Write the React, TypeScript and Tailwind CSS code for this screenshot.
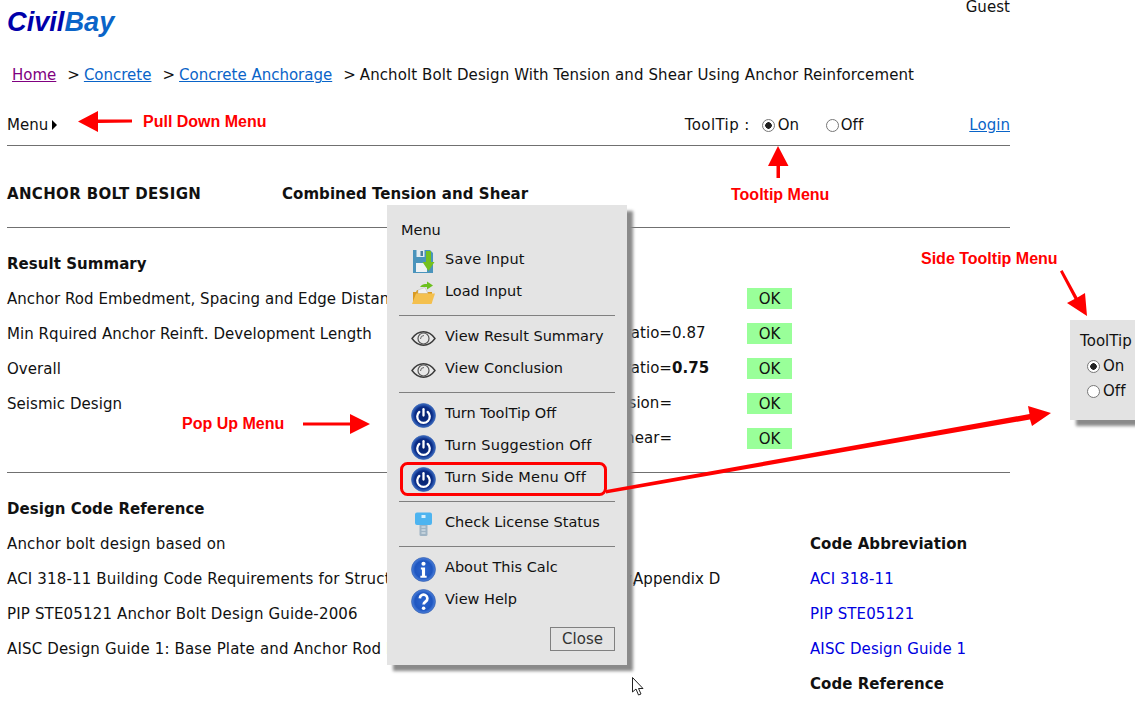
import React, { useId } from 'react';

// round blue glossy button used for power / info / help icons
function Orb({ dark, children }: { dark?: boolean; children: React.ReactNode }) {
  const id = useId();
  return (
    <svg width="25" height="25" viewBox="0 0 24 24">
      <defs>
        <radialGradient id={id} cx="50%" cy="50%" r="55%">
          <stop offset="0%" stopColor={dark ? '#08246e' : '#2d66d0'} />
          <stop offset="65%" stopColor={dark ? '#0a2c86' : '#1f56c0'} />
          <stop offset="100%" stopColor={dark ? '#4f86dc' : '#5f92e6'} />
        </radialGradient>
      </defs>
      <circle cx="12" cy="12" r="11.5" fill={`url(#${id})`} stroke="#2a55a8" strokeWidth="0.6" />
      {children}
    </svg>
  );
}

function PowerIcon() {
  return (
    <Orb dark>
      <path d="M8 8.6a6 6 0 1 0 8 0" fill="none" stroke="#fff" strokeWidth="2.2" strokeLinecap="round" />
      <path d="M12 6v6" stroke="#fff" strokeWidth="2.2" strokeLinecap="round" />
    </Orb>
  );
}

function InfoIcon() {
  return (
    <Orb>
      <circle cx="12" cy="6.5" r="2" fill="#fff" />
      <path d="M9.5 10h4v8h1.5v2H9v-2h1.5v-6h-1z" fill="#fff" />
    </Orb>
  );
}

function HelpIcon() {
  return (
    <Orb>
      <path d="M8.5 9a3.6 3.6 0 1 1 5.6 3c-1.3.9-2 1.4-2 2.8" fill="none" stroke="#fff" strokeWidth="2.6" />
      <circle cx="12.1" cy="18.5" r="1.7" fill="#fff" />
    </Orb>
  );
}

function EyeIcon() {
  return (
    <svg width="25" height="25" viewBox="0 0 25 25">
      <path d="M1 12.500C5 7 9 5.800 12.500 5.800S20 7 24 12.500C20 18 16 19.200 12.500 19.200S5 18 1 12.500z" fill="#e8e8e8" stroke="#3a3a3a" strokeWidth="1.4" />
      <circle cx="12.500" cy="12.500" r="5.500" fill="none" stroke="#555" strokeWidth="1.2" />
      <path d="M9.500 13a3.500 3.500 0 0 1 3.500-3.500" fill="none" stroke="#666" strokeWidth="1" />
    </svg>
  );
}

function SaveIcon() {
  return (
    <svg width="25" height="25" viewBox="0 0 25 25">
      <path d="M2 1h17l3 3v20H2z" fill="#4a94bc" />
      <rect x="5.500" y="1" width="8" height="7" fill="#e4ecf0" />
      <rect x="9.500" y="2" width="2.500" height="5" fill="#4a7fa0" />
      <rect x="5" y="14" width="11" height="9" fill="#eef2f4" />
      <path d="M15 2h5v11h3.500l-6 9-6-9H15z" fill="#74c020" />
    </svg>
  );
}

function FolderIcon() {
  return (
    <svg width="25" height="25" viewBox="0 0 25 25">
      <path d="M2 11h3l1-2h8l2 2h5v11H2z" fill="#d99a22" />
      <path d="M7 9l7-2.500 3 6H7z" fill="#f0f0f0" stroke="#bbb" strokeWidth="0.5" />
      <path d="M5 12.500h19l-3.500 10.500H1z" fill="#f4c04e" />
      <path d="M9 6c1.500-2.500 4-3 7-3V.5L22 4.500 16 8.500V6c-3 0-5 0-7 0z" fill="#6cc01e" />
    </svg>
  );
}

function KeyIcon() {
  return (
    <svg width="25" height="25" viewBox="0 0 25 25">
      <path d="M8.500 13h8v9.500a1.500 1.500 0 0 1-1.500 1.500h-5a1.500 1.500 0 0 1-1.500-1.500z" fill="#9fb4c4" />
      <path d="M10.500 15h4M10.500 18h4M10.500 21h4" stroke="#e8eef2" strokeWidth="1.2" />
      <path d="M4 2.500A2 2 0 0 1 6 .5h13a2 2 0 0 1 2 2V11a2 2 0 0 1-2 2H6a2 2 0 0 1-2-2z" fill="#4db4f0" />
      <rect x="10.500" y="3" width="4" height="3" fill="#d8f0fc" />
    </svg>
  );
}

function MenuRow({ icon, label, wide }: { icon: React.ReactNode; label: string; wide?: boolean }) {
  return (
    <div className="h-8 flex items-center pl-[24px]">
      <span className="w-[25px] h-[25px] flex shrink-0">{icon}</span>
      <span className={wide ? 'ml-[9px] pb-[3px] whitespace-nowrap tracking-[0.2px]' : 'ml-[9px] pb-[3px] whitespace-nowrap'}>{label}</span>
    </div>
  );
}

function Divider() {
  return <hr className="my-[6px] mx-3 border-0 h-px bg-[#808080]" />;
}

function Radio({ checked }: { checked?: boolean }) {
  return (
    <input
      type="radio"
      readOnly
      checked={!!checked}
      className="appearance-none w-[13px] h-[13px] rounded-full border border-[#777] bg-white checked:bg-[radial-gradient(circle,#222_0,#222_3px,#fff_3.5px)]"
    />
  );
}

function ResultRow({ label, name, value }: { label?: string; name?: string; value?: React.ReactNode }) {
  return (
    <div className="h-[35px] grid grid-cols-[593px_147px_45px] items-center whitespace-nowrap">
      <div>{label}</div>
      <div className="flex pb-[2px]">
        <span className="w-[72px] text-right">{name}</span>
        <span>{value}</span>
      </div>
      <div className="h-[21px] mb-[2px] bg-[#99ff99] flex items-center justify-center pt-[2px]">OK</div>
    </div>
  );
}

function CodeRow({ label, middle, right, bold }: { label: string; middle?: string; right: string; bold?: boolean }) {
  return (
    <div className="h-[35px] grid grid-cols-[626px_177px_auto] items-center whitespace-nowrap">
      <div className="tracking-[0.16px]">{label}</div>
      <div>{middle}</div>
      <div className={bold ? 'font-bold' : 'text-[#0000e0] tracking-[0.1px]'}>{right}</div>
    </div>
  );
}

export default function App() {
  return (
    <div className="relative h-[701px] w-[1135px] overflow-hidden bg-white text-[15px] tracking-[0.05px] text-[#111] font-['DejaVu_Sans','Liberation_Sans',sans-serif]">
      <div className="w-[1003px] ml-[7px]">
        {/* Header */}
        <div className="h-[58px] flex justify-between">
          <div className="font-['Liberation_Sans',sans-serif] font-bold italic text-[27.2px] tracking-normal leading-none pt-[8px]">
            <span className="text-[#0000aa]">Civil</span>
            <span className="text-[#0a64c8]">Bay</span>
          </div>
          <div className="leading-[15px]">Guest</div>
        </div>

        {/* Breadcrumb */}
        <div className="h-[35px] flex items-center pl-[5px] whitespace-nowrap tracking-normal">
          <a className="underline text-[#800080]">Home</a>
          <span className="ml-[11px]">&gt;</span>
          <a className="underline text-[#0a64c8] ml-1">Concrete</a>
          <span className="ml-[11px]">&gt;</span>
          <a className="underline text-[#0a64c8] ml-1">Concrete Anchorage</a>
          <span className="ml-[11px]">&gt;</span>
          <span className="ml-1 tracking-[0.1px]">Ancholt Bolt Design With Tension and Shear Using Anchor Reinforcement</span>
        </div>

        {/* Menu bar */}
        <div className="mt-4 h-8 flex items-center justify-between">
          <div className="flex items-center">
            Menu
            <span className="ml-1 w-0 h-0 border-y-[5px] border-y-transparent border-l-[5px] border-l-black" />
          </div>
          <div className="flex items-center">
            <span className="w-[66px] whitespace-nowrap tracking-[0.4px]">ToolTip :</span>
            <span className="ml-[11px] flex items-center"><Radio checked /></span>
            <span className="ml-[3px] pt-px w-[48px]">On</span>
            <span className="flex items-center"><Radio /></span>
            <span className="ml-[2px] pt-px">Off</span>
            <a className="underline text-[#0a64c8] ml-[106px]">Login</a>
          </div>
        </div>
        <hr className="mt-[4px] border-0 h-px bg-[#707070]" />

        <div className="mt-[30px] h-[36px] flex items-center font-bold whitespace-nowrap">
          <span className="w-[275px] tracking-[0.35px]">ANCHOR BOLT DESIGN</span>
          <span>Combined Tension and Shear</span>
        </div>
        <hr className="mt-[15px] border-0 h-px bg-[#707070]" />

        {/* Result summary */}
        <div className="mt-[18px] h-[36px] flex items-center font-bold">Result Summary</div>
        <ResultRow label="Anchor Rod Embedment, Spacing and Edge Distance" />
        <ResultRow label="Min Rquired Anchor Reinft. Development Length" name="ratio=" value="0.87" />
        <ResultRow label="Overall" name="ratio=" value={<span className="font-bold">0.75</span>} />
        <ResultRow label="Seismic Design" name="Tension=" />
        <ResultRow name="Shear=" />
        <hr className="mt-[15px] border-0 h-px bg-[#707070]" />

        {/* Design code reference */}
        <div className="mt-[18px] h-[36px] flex items-center font-bold">Design Code Reference</div>
        <CodeRow label="Anchor bolt design based on" right="Code Abbreviation" bold />
        <CodeRow label="ACI 318-11 Building Code Requirements for Structural Concrete and Commentary," middle="Appendix D" right="ACI 318-11" />
        <CodeRow label="PIP STE05121 Anchor Bolt Design Guide-2006" right="PIP STE05121" />
        <CodeRow label="AISC Design Guide 1: Base Plate and Anchor Rod Design" right="AISC Design Guide 1" />
        <CodeRow label="" right="Code Reference" bold />
      </div>

      {/* Pop up menu */}
      <div className="absolute left-[387px] top-[205px] w-[240px] h-[460px] bg-[#e4e4e4] text-[14.5px] tracking-normal shadow-[6px_6px_3px_#8a8a8a]">
        <div className="h-10 pl-[14px] pt-[15px] leading-5">Menu</div>
        <MenuRow icon={<SaveIcon />} label="Save Input" wide />
        <MenuRow icon={<FolderIcon />} label="Load Input" />
        <Divider />
        <MenuRow icon={<EyeIcon />} label="View Result Summary" />
        <MenuRow icon={<EyeIcon />} label="View Conclusion" />
        <Divider />
        <MenuRow icon={<PowerIcon />} label="Turn ToolTip Off" />
        <MenuRow icon={<PowerIcon />} label="Turn Suggestion Off" wide />
        <MenuRow icon={<PowerIcon />} label="Turn Side Menu Off" wide />
        <Divider />
        <MenuRow icon={<KeyIcon />} label="Check License Status" />
        <Divider />
        <MenuRow icon={<InfoIcon />} label="About This Calc" />
        <MenuRow icon={<HelpIcon />} label="View Help" />
        <div className="flex justify-end pr-3 mt-[10px]">
          <button className="w-[65px] h-[24px] border border-[#808080] bg-[#e4e4e4] text-[#333] text-[15px]">Close</button>
        </div>
      </div>

      {/* Side tooltip menu */}
      <div className="absolute left-[1070px] top-[320px] w-[80px] h-[100px] bg-[#e3e3e3] shadow-[6px_6px_3px_#8a8a8a] pl-[10px] pt-[12px]">
        <div className="leading-[18px]">ToolTip</div>
        <div className="mt-[7px] ml-[7px] flex items-center leading-[18px]"><Radio checked /><span className="ml-[3px]">On</span></div>
        <div className="mt-[7px] ml-[7px] flex items-center leading-[18px]"><Radio /><span className="ml-[3px]">Off</span></div>
      </div>

      {/* Annotations */}
      <svg className="absolute inset-0 pointer-events-none" width="1135" height="701" viewBox="0 0 1135 701">
        <g fill="#ff0000" stroke="none">
          <path d="M78 121.500L98 111V119.500L132 119.500V122.500L98 123V132z" />
          <path d="M778 146L788.500 166H780V178H776.500V166H768z" />
          <path d="M370 424L350 414V422.500H303V425.500H350V434z" />
          <path d="M1087 316L1067 303L1074.500 299L1060 271.500L1062.500 270L1077.500 297.500L1085 293z" />
          <path d="M1051 413L1028 406L1029.500 414L606 490V493.500L1030 419.500L1032 426z" />
        </g>
        <rect x="401.500" y="463.500" width="204" height="31" rx="6" fill="none" stroke="#ff0000" strokeWidth="3" />
        {/* mouse cursor */}
        <path d="M632.500 677.500V692L636 689L638.500 695L641 694L638.500 688.500H643z" fill="#fff" stroke="#222" strokeWidth="1" />
      </svg>
      <span className="absolute left-[143px] top-[113px] text-[16px] tracking-normal leading-[18px] font-bold text-[#ff0000] whitespace-nowrap font-['Liberation_Sans',sans-serif]">Pull Down Menu</span>
      <span className="absolute left-[731px] top-[186px] text-[16px] tracking-normal leading-[18px] font-bold text-[#ff0000] whitespace-nowrap font-['Liberation_Sans',sans-serif]">Tooltip Menu</span>
      <span className="absolute left-[921px] top-[250px] text-[16px] tracking-normal leading-[18px] font-bold text-[#ff0000] whitespace-nowrap font-['Liberation_Sans',sans-serif]">Side Tooltip Menu</span>
      <span className="absolute left-[182px] top-[415px] text-[16px] tracking-normal leading-[18px] font-bold text-[#ff0000] whitespace-nowrap font-['Liberation_Sans',sans-serif]">Pop Up Menu</span>
    </div>
  );
}
